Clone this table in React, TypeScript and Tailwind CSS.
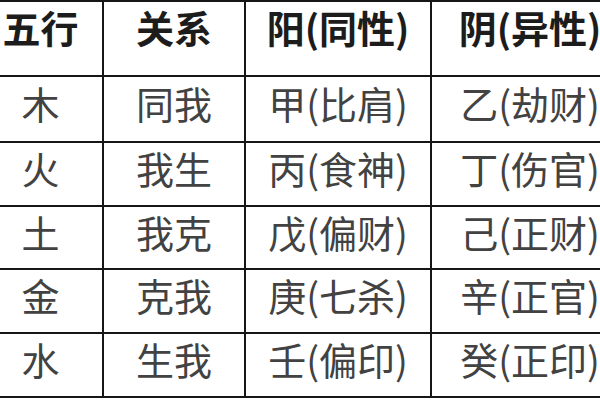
import React from "react";

const cols = [
  "w-[104px] pr-[21px]",
  "w-[142px]",
  "w-[186px]",
  "w-[168px] pl-[28px]",
];
const header = ["五行", "关系", "阳(同性)", "阴(异性)"];
const rows: { h: string; cells: string[] }[] = [
  { h: "h-[66px]", cells: ["木", "同我", "甲(比肩)", "乙(劫财)"] },
  { h: "h-[64px]", cells: ["火", "我生", "丙(食神)", "丁(伤官)"] },
  { h: "h-[63px]", cells: ["土", "我克", "戊(偏财)", "己(正财)"] },
  { h: "h-[64px]", cells: ["金", "克我", "庚(七杀)", "辛(正官)"] },
  { h: "h-[64px]", cells: ["水", "生我", "壬(偏印)", "癸(正印)"] },
];

const font = { fontFamily: '"Noto Sans CJK SC", "Noto Sans", sans-serif' };

export default function App() {
  return (
    <div className="w-[600px] h-[400px] overflow-hidden bg-white" style={font}>
      <div className="w-[600px] border-t-2 border-[#161616]">
        <div className="flex h-[75px]">
          {header.map((t, i) => (
            <div
              key={i}
              className={`${cols[i]} shrink-0 flex items-center justify-center pb-[24px] border-b-2 border-[#161616] ${i < 3 ? "border-r-2" : ""} text-[38px] leading-[46px] font-bold whitespace-nowrap text-[#1c1c1c]`}
            >
              {t}
            </div>
          ))}
        </div>
        {rows.map((r, ri) => (
          <div key={ri} className={`flex ${r.h}`}>
            {r.cells.map((t, i) => (
              <div
                key={i}
                className={`${cols[i]} shrink-0 flex items-center justify-center pb-[12px] border-b-2 border-[#161616] ${i < 3 ? "border-r-2" : ""} text-[38px] leading-[46px] whitespace-nowrap text-[#424242]`}
              >
                {t}
              </div>
            ))}
          </div>
        ))}
      </div>
    </div>
  );
}
